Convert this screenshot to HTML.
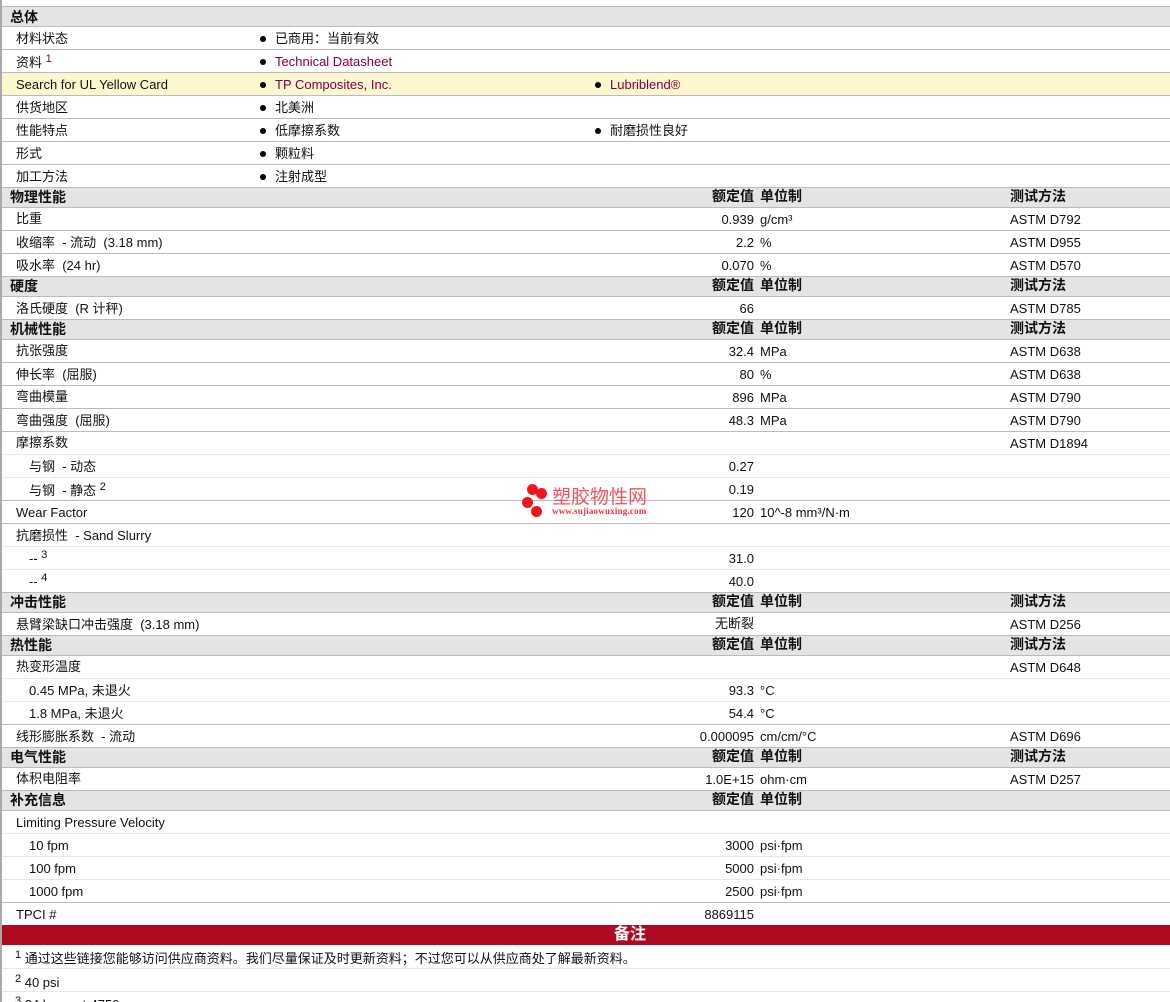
<!DOCTYPE html>
<html style="width:1170px;height:1002px;overflow:hidden"><head><meta charset="utf-8">
<style>
html,body{margin:0;padding:0;background:#fff;}
body{width:1170px;height:1002px;overflow:hidden;position:relative;font-family:"Liberation Sans","WenQuanYi Zen Hei","Noto Sans CJK SC",sans-serif;font-size:13px;color:#111;}
.edge{position:absolute;left:0;top:0;width:2px;height:1002px;background:#aaa;}
.l{position:absolute;left:2px;right:0;height:1px;background:#bbb;}
.s{background:#e8e8e8;}
.h{position:absolute;left:2px;right:0;height:19px;background:#e4e4e4;}
.y{position:absolute;left:2px;right:0;top:73px;height:22px;background:#fdf7d0;}
.t{position:absolute;white-space:nowrap;line-height:14px;margin-top:1px;}
.a{left:16px;}.b{left:29px;}.c{left:275px;}.d{left:610px;}
.v{right:416px;}.u{left:760px;}.m{left:1010px;}
.hb{font-weight:bold;font-size:14px;margin-top:0;}
.lk{color:#800040;}
.dot{position:absolute;width:6px;height:6px;border-radius:50%;background:#000;}
sup{font-size:11px;line-height:0;vertical-align:5px;}
.r{position:absolute;border-radius:50%;width:11px;height:11px;background:#f4141c;}
</style></head><body>
<div class="edge"></div>
<div class="l" style="top:6px"></div>
<div class="h" style="top:7px"></div><div class="h" style="top:188px"></div><div class="h" style="top:277px"></div><div class="h" style="top:320px"></div><div class="h" style="top:593px"></div><div class="h" style="top:636px"></div><div class="h" style="top:748px"></div><div class="h" style="top:791px"></div>
<div class="y"></div>
<div class="l" style="top:26px"></div><div class="l" style="top:49px"></div><div class="l" style="top:72px"></div><div class="l" style="top:95px"></div><div class="l" style="top:118px"></div><div class="l" style="top:141px"></div><div class="l" style="top:164px"></div><div class="l" style="top:187px"></div><div class="l" style="top:207px"></div><div class="l" style="top:230px"></div><div class="l" style="top:253px"></div><div class="l" style="top:276px"></div><div class="l" style="top:296px"></div><div class="l" style="top:319px"></div><div class="l" style="top:339px"></div><div class="l" style="top:362px"></div><div class="l" style="top:385px"></div><div class="l" style="top:408px"></div><div class="l" style="top:431px"></div><div class="l s" style="top:454px"></div><div class="l s" style="top:477px"></div><div class="l" style="top:500px"></div><div class="l" style="top:523px"></div><div class="l s" style="top:546px"></div><div class="l s" style="top:569px"></div><div class="l" style="top:592px"></div><div class="l" style="top:612px"></div><div class="l" style="top:635px"></div><div class="l" style="top:655px"></div><div class="l s" style="top:678px"></div><div class="l s" style="top:701px"></div><div class="l" style="top:724px"></div><div class="l" style="top:747px"></div><div class="l" style="top:767px"></div><div class="l" style="top:790px"></div><div class="l" style="top:810px"></div><div class="l s" style="top:833px"></div><div class="l s" style="top:856px"></div><div class="l s" style="top:879px"></div><div class="l" style="top:902px"></div><div class="l s" style="top:968px"></div><div class="l s" style="top:991px"></div>
<div style="position:absolute;left:2px;right:0;top:925px;height:20px;background:#b00a22"></div>

<span class="t hb" style="left:10px;top:10px">总体</span>
<span class="t a" style="top:31px">材料状态</span><span class="dot" style="left:260px;top:36px"></span><span class="t c" style="top:31px">已商用：当前有效</span>
<span class="t a" style="top:55px">资料 <sup class="lk">1</sup></span><span class="dot" style="left:260px;top:59px"></span><span class="t c lk" style="top:54px">Technical Datasheet</span>
<span class="t a" style="top:77px">Search for UL Yellow Card</span><span class="dot" style="left:260px;top:82px"></span><span class="t c lk" style="top:77px">TP Composites, Inc.</span><span class="dot" style="left:595px;top:82px"></span><span class="t d lk" style="top:77px">Lubriblend®</span>
<span class="t a" style="top:100px">供货地区</span><span class="dot" style="left:260px;top:105px"></span><span class="t c" style="top:100px">北美洲</span>
<span class="t a" style="top:123px">性能特点</span><span class="dot" style="left:260px;top:128px"></span><span class="t c" style="top:123px">低摩擦系数</span><span class="dot" style="left:595px;top:128px"></span><span class="t d" style="top:123px">耐磨损性良好</span>
<span class="t a" style="top:146px">形式</span><span class="dot" style="left:260px;top:151px"></span><span class="t c" style="top:146px">颗粒料</span>
<span class="t a" style="top:169px">加工方法</span><span class="dot" style="left:260px;top:174px"></span><span class="t c" style="top:169px">注射成型</span>

<span class="t hb" style="left:10px;top:190px">物理性能</span><span class="t hb v" style="top:189px">额定值</span><span class="t hb u" style="top:189px">单位制</span><span class="t hb m" style="top:189px">测试方法</span>
<span class="t a" style="top:211px">比重</span><span class="t v" style="top:212px">0.939</span><span class="t u" style="top:212px">g/cm³</span><span class="t m" style="top:212px">ASTM D792</span>
<span class="t a" style="top:235px">收缩率 &nbsp;- 流动 &nbsp;(3.18 mm)</span><span class="t v" style="top:235px">2.2</span><span class="t u" style="top:235px">%</span><span class="t m" style="top:235px">ASTM D955</span>
<span class="t a" style="top:258px">吸水率 &nbsp;(24 hr)</span><span class="t v" style="top:258px">0.070</span><span class="t u" style="top:258px">%</span><span class="t m" style="top:258px">ASTM D570</span>

<span class="t hb" style="left:10px;top:279px">硬度</span><span class="t hb v" style="top:278px">额定值</span><span class="t hb u" style="top:278px">单位制</span><span class="t hb m" style="top:278px">测试方法</span>
<span class="t a" style="top:301px">洛氏硬度 &nbsp;(R 计秤)</span><span class="t v" style="top:301px">66</span><span class="t m" style="top:301px">ASTM D785</span>

<span class="t hb" style="left:10px;top:322px">机械性能</span><span class="t hb v" style="top:321px">额定值</span><span class="t hb u" style="top:321px">单位制</span><span class="t hb m" style="top:321px">测试方法</span>
<span class="t a" style="top:343px">抗张强度</span><span class="t v" style="top:344px">32.4</span><span class="t u" style="top:344px">MPa</span><span class="t m" style="top:344px">ASTM D638</span>
<span class="t a" style="top:367px">伸长率 &nbsp;(屈服)</span><span class="t v" style="top:367px">80</span><span class="t u" style="top:367px">%</span><span class="t m" style="top:367px">ASTM D638</span>
<span class="t a" style="top:389px">弯曲模量</span><span class="t v" style="top:390px">896</span><span class="t u" style="top:390px">MPa</span><span class="t m" style="top:390px">ASTM D790</span>
<span class="t a" style="top:413px">弯曲强度 &nbsp;(屈服)</span><span class="t v" style="top:413px">48.3</span><span class="t u" style="top:413px">MPa</span><span class="t m" style="top:413px">ASTM D790</span>
<span class="t a" style="top:435px">摩擦系数</span><span class="t m" style="top:436px">ASTM D1894</span>
<span class="t b" style="top:459px">与钢 &nbsp;- 动态</span><span class="t v" style="top:459px">0.27</span>
<span class="t b" style="top:483px">与钢 &nbsp;- 静态 <sup>2</sup></span><span class="t v" style="top:482px">0.19</span>
<span class="t a" style="top:505px">Wear Factor</span><span class="t v" style="top:505px">120</span><span class="t u" style="top:505px">10^-8 mm³/N·m</span>
<span class="t a" style="top:528px">抗磨损性 &nbsp;- Sand Slurry</span>
<span class="t b" style="top:551px">-- <sup>3</sup></span><span class="t v" style="top:551px">31.0</span>
<span class="t b" style="top:574px">-- <sup>4</sup></span><span class="t v" style="top:574px">40.0</span>

<span class="t hb" style="left:10px;top:595px">冲击性能</span><span class="t hb v" style="top:594px">额定值</span><span class="t hb u" style="top:594px">单位制</span><span class="t hb m" style="top:594px">测试方法</span>
<span class="t a" style="top:617px">悬臂梁缺口冲击强度 &nbsp;(3.18 mm)</span><span class="t v" style="top:616px">无断裂</span><span class="t m" style="top:617px">ASTM D256</span>

<span class="t hb" style="left:10px;top:638px">热性能</span><span class="t hb v" style="top:637px">额定值</span><span class="t hb u" style="top:637px">单位制</span><span class="t hb m" style="top:637px">测试方法</span>
<span class="t a" style="top:659px">热变形温度</span><span class="t m" style="top:660px">ASTM D648</span>
<span class="t b" style="top:683px">0.45 MPa, 未退火</span><span class="t v" style="top:683px">93.3</span><span class="t u" style="top:683px">°C</span>
<span class="t b" style="top:706px">1.8 MPa, 未退火</span><span class="t v" style="top:706px">54.4</span><span class="t u" style="top:706px">°C</span>
<span class="t a" style="top:729px">线形膨胀系数 &nbsp;- 流动</span><span class="t v" style="top:729px">0.000095</span><span class="t u" style="top:729px">cm/cm/°C</span><span class="t m" style="top:729px">ASTM D696</span>

<span class="t hb" style="left:10px;top:750px">电气性能</span><span class="t hb v" style="top:749px">额定值</span><span class="t hb u" style="top:749px">单位制</span><span class="t hb m" style="top:749px">测试方法</span>
<span class="t a" style="top:771px">体积电阻率</span><span class="t v" style="top:772px">1.0E+15</span><span class="t u" style="top:772px">ohm·cm</span><span class="t m" style="top:772px">ASTM D257</span>

<span class="t hb" style="left:10px;top:793px">补充信息</span><span class="t hb v" style="top:792px">额定值</span><span class="t hb u" style="top:792px">单位制</span>
<span class="t a" style="top:815px">Limiting Pressure Velocity</span>
<span class="t b" style="top:838px">10 fpm</span><span class="t v" style="top:838px">3000</span><span class="t u" style="top:838px">psi·fpm</span>
<span class="t b" style="top:861px">100 fpm</span><span class="t v" style="top:861px">5000</span><span class="t u" style="top:861px">psi·fpm</span>
<span class="t b" style="top:884px">1000 fpm</span><span class="t v" style="top:884px">2500</span><span class="t u" style="top:884px">psi·fpm</span>
<span class="t a" style="top:907px">TPCI #</span><span class="t v" style="top:907px">8869115</span>

<span class="t" style="left:614px;top:926px;margin-top:0;font-size:16px;line-height:18px;color:#fff;font-weight:bold">备注</span>
<span class="t" style="left:15px;top:951px"><sup>1</sup> 通过这些链接您能够访问供应商资料。我们尽量保证及时更新资料；不过您可以从供应商处了解最新资料。</span>
<span class="t" style="left:15px;top:975px"><sup>2</sup> 40 psi</span>
<span class="t" style="left:15px;top:997px"><sup>3</sup> 24 hours, t-4750</span>

<div class="r" style="left:527px;top:484px"></div><div class="r" style="left:536px;top:488px"></div><div class="r" style="left:522px;top:497px"></div><div class="r" style="left:531px;top:506px"></div>
<span class="t" style="left:552px;top:488px;margin-top:0;font-size:19px;line-height:20px;color:#ee5560">塑胶物性网</span>
<span class="t" style="left:552px;top:505px;margin-top:0;font-family:'Liberation Serif',serif;font-size:9px;line-height:12px;font-weight:bold;color:#ee3040;letter-spacing:.2px">www.sujiaowuxing.com</span>
</body></html>
